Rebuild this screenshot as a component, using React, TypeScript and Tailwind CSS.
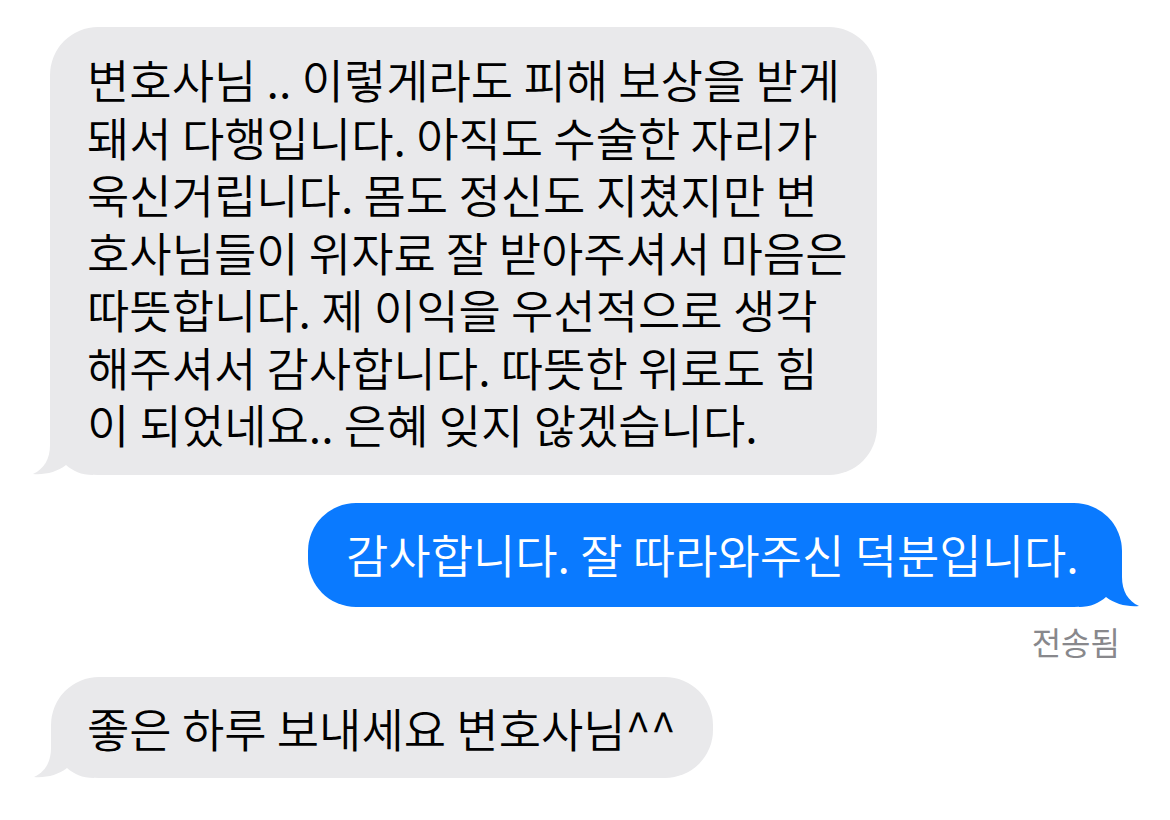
import type { ReactNode } from 'react';

const FONT = '"Noto Sans CJK KR", "Noto Sans", sans-serif';

function Tail({ side, color }: { side: 'left' | 'right'; color: string }) {
  const isLeft = side === 'left';
  return (
    <svg
      width="60"
      height="50"
      viewBox="0 0 60 50"
      className={isLeft ? 'absolute bottom-0 left-[-17px]' : 'absolute bottom-0 right-[-17px] -scale-x-100'}
    >
      <path
        d="M17 0 L17 20 C17 34 11 44 0 49 C12 50 24 47 33 40 C40 46 48 50 60 50 L60 0 Z"
        fill={color}
      />
    </svg>
  );
}

function Bubble({
  children,
  side,
  className,
}: {
  children: ReactNode;
  side: 'left' | 'right';
  className: string;
}) {
  const color = side === 'left' ? '#e9e9eb' : '#0a7aff';
  return (
    <div className={`relative rounded-[48px] ${className}`}>
      <Tail side={side} color={color} />
      <div className="relative">{children}</div>
    </div>
  );
}

const firstMessage = [
  '변호사님 .. 이렇게라도 피해 보상을 받게',
  '돼서 다행입니다. 아직도 수술한 자리가',
  '욱신거립니다. 몸도 정신도 지쳤지만 변',
  '호사님들이 위자료 잘 받아주셔서 마음은',
  '따뜻합니다. 제 이익을 우선적으로 생각',
  '해주셔서 감사합니다. 따뜻한 위로도 힘',
  '이 되었네요.. 은혜 잊지 않겠습니다.',
];

export default function App() {
  return (
    <div
      className="flex h-[820px] w-[1170px] flex-col overflow-hidden bg-white pt-[27px]"
      style={{ fontFamily: FONT }}
    >
      <Bubble side="left" className="ml-[50px] h-[448px] w-[827px] bg-[#e9e9eb] pl-[37px] pt-[23px]">
        <div className="text-[46px] font-[350] leading-[57.5px] text-black">
          {firstMessage.map(line => (
            <div key={line} className="whitespace-nowrap">
              {line}
            </div>
          ))}
        </div>
      </Bubble>

      <Bubble side="right" className="ml-[308px] mt-[28px] h-[104px] w-[814px] bg-[#0a7aff] pl-[38px] pt-[22px]">
        <div className="whitespace-nowrap text-[46px] font-[350] leading-[57px] text-white">
          감사합니다. 잘 따라와주신 덕분입니다.
        </div>
      </Bubble>

      <div className="mr-[50px] mt-[12px] self-end text-[32px] leading-[44px] text-[#88888c]">전송됨</div>

      <Bubble side="left" className="ml-[51px] mt-[14px] h-[101px] w-[662px] bg-[#e9e9eb] pl-[36px] pt-[22px]">
        <div className="whitespace-nowrap text-[46px] font-[350] leading-[57px] text-black">
          좋은 하루 보내세요 변호사님^^
        </div>
      </Bubble>
    </div>
  );
}
